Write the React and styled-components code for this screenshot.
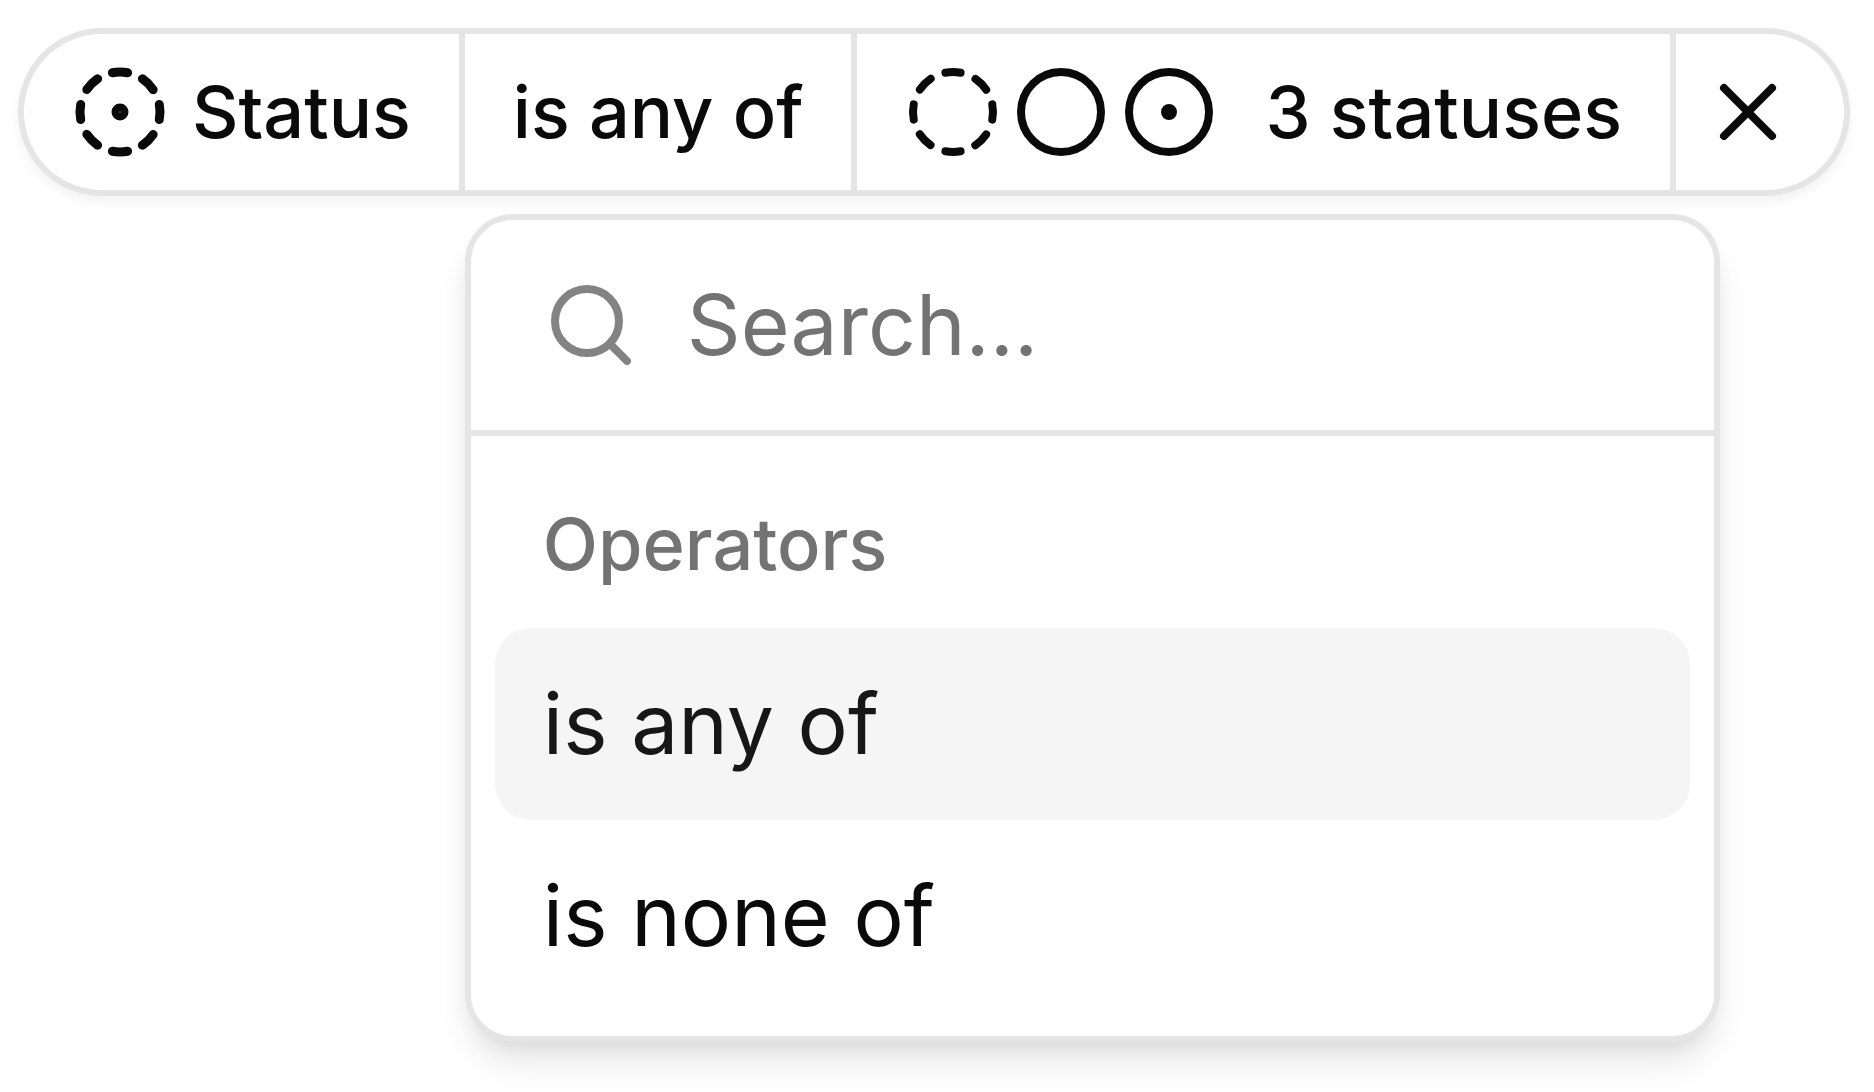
import React, { useState } from "react";
import styled, { createGlobalStyle } from "styled-components";
import { Circle, CircleDashed, CircleDot, CircleDotDashed, Search, X } from "lucide-react";

const color = {
  background: "#ffffff",
  foreground: "#0a0a0a",
  muted: "#737373",
  border: "#e5e5e5",
  accent: "#f5f5f5",
  accentForeground: "#171717",
};

const GlobalStyle = createGlobalStyle`
  *, *::before, *::after { box-sizing: border-box; }
  body {
    margin: 0;
    background: ${color.background};
    color: ${color.foreground};
    font-family: Inter, "Liberation Sans", sans-serif;
    font-optical-sizing: none;
    -webkit-font-smoothing: antialiased;
  }
  button, input { font: inherit; color: inherit; }
`;

const Page = styled.main`
  min-height: 100vh;
  padding: 28px 18px;
`;

const FilterPill = styled.div`
  display: flex;
  width: fit-content;
  height: 168px;
  border: 6px solid ${color.border};
  border-radius: 84px;
  background: ${color.background};
  box-shadow: 0 6px 12px 0 rgb(0 0 0 / 0.05);
  font-size: 72px;
  font-weight: 500;
  line-height: 96px;
  white-space: nowrap;
`;

const Divider = styled.span`
  width: 6px;
  background: ${color.border};
`;

const Segment = styled.button`
  display: flex;
  align-items: center;
  gap: ${({ $gap }) => $gap || 0}px;
  height: 100%;
  padding: 0 48px;
  border: 0;
  background: transparent;
`;

const Subject = styled.div`
  display: flex;
  align-items: center;
  gap: 24px;
  padding: 0 48px;
`;

const CloseButton = styled(Segment)`
  padding: 0 48px 0 24px;
`;

const IconGroup = styled.span`
  display: flex;
  gap: 12px;
`;

const Anchor = styled.div`
  position: relative;
`;

const Popover = styled.div`
  position: absolute;
  top: calc(100% + 24px);
  left: 0;
  width: 1255px;
  border: 6px solid ${color.border};
  border-radius: 48px;
  background: ${color.background};
  box-shadow: 0 24px 36px -6px rgb(0 0 0 / 0.1), 0 12px 24px -12px rgb(0 0 0 / 0.1);
  font-size: 84px;
  font-weight: 400;
  line-height: 120px;
`;

const SearchRow = styled.label`
  display: flex;
  align-items: center;
  gap: 48px;
  height: 216px;
  padding: 0 72px;
  border-bottom: 6px solid ${color.border};

  svg {
    flex: none;
    opacity: 0.5;
  }
`;

const SearchInput = styled.input`
  flex: 1;
  min-width: 0;
  height: 120px;
  padding: 0;
  border: 0;
  outline: 0;
  background: transparent;

  &::placeholder {
    color: ${color.muted};
    opacity: 1;
  }
`;

const Group = styled.div`
  display: flex;
  flex-direction: column;
  padding: 24px;
`;

const GroupHeading = styled.div`
  padding: 36px 48px;
  color: ${color.muted};
  font-size: 72px;
  font-weight: 500;
  line-height: 96px;
`;

const Option = styled.button`
  padding: 36px 48px;
  border: 0;
  border-radius: 36px;
  background: ${({ $active }) => ($active ? color.accent : "transparent")};
  color: ${({ $active }) => ($active ? color.accentForeground : color.foreground)};
  text-align: left;
`;

const OPERATORS = ["is any of", "is none of"];

export default function App() {
  const [active, setActive] = useState(OPERATORS[0]);
  const [query, setQuery] = useState("");
  const visible = OPERATORS.filter((name) => name.includes(query.toLowerCase()));

  return (
    <>
      <GlobalStyle />
      <Page>
        <FilterPill>
          <Subject>
            <CircleDotDashed size={96} strokeWidth={2.25} />
            <span>Status</span>
          </Subject>
          <Divider />
          <Anchor>
            <Segment type="button" aria-haspopup="listbox" aria-expanded="true">
              is any of
            </Segment>
            <Popover>
              <SearchRow>
                <Search size={96} />
                <SearchInput
                  type="text"
                  placeholder="Search..."
                  aria-label="Search operators"
                  value={query}
                  onChange={(event) => setQuery(event.target.value)}
                />
              </SearchRow>
              <Group role="listbox" aria-label="Operators">
                <GroupHeading>Operators</GroupHeading>
                {visible.map((name) => (
                  <Option
                    key={name}
                    type="button"
                    role="option"
                    aria-selected={name === active}
                    $active={name === active}
                    onClick={() => setActive(name)}
                  >
                    {name}
                  </Option>
                ))}
              </Group>
            </Popover>
          </Anchor>
          <Divider />
          <Segment type="button" $gap={48}>
            <IconGroup>
              <CircleDashed size={96} />
              <Circle size={96} />
              <CircleDot size={96} />
            </IconGroup>
            <span>3 statuses</span>
          </Segment>
          <Divider />
          <CloseButton type="button" aria-label="Remove filter">
            <X size={96} />
          </CloseButton>
        </FilterPill>
      </Page>
    </>
  );
}
